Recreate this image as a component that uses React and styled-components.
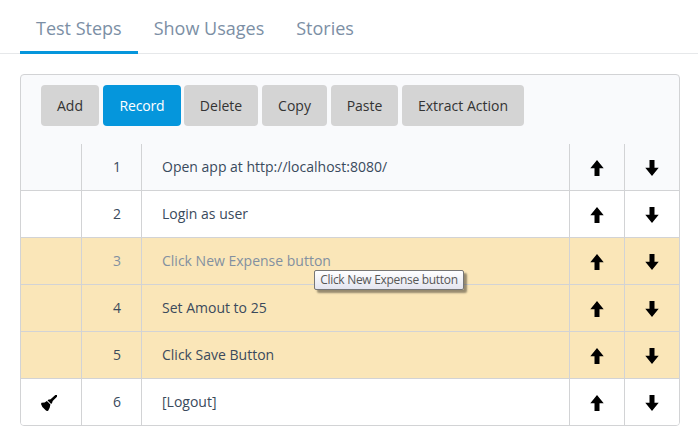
import React from "react";
import styled, { createGlobalStyle } from "styled-components";

const GlobalStyle = createGlobalStyle`
  * { box-sizing: border-box; }
  body {
    margin: 0;
    background: #fff;
    font-family: "Open Sans", sans-serif;
    font-size: 14px;
    color: #3a4a5c;
  }
`;

const Page = styled.main`
  height: 447px;
  overflow: hidden;
`;

const TabBar = styled.nav`
  display: flex;
  height: 54px;
  padding-left: 20px;
  background: linear-gradient(#e6e8ea, #e6e8ea) 0 53px / 100% 1px no-repeat;
`;

const Tab = styled.a`
  height: 54px;
  padding: 14px 16px 0;
  font-size: 18px;
  line-height: 28px;
  color: #7c8fa5;
  white-space: nowrap;
  border-bottom: 3px solid ${(p) => (p.$active ? "#0596dc" : "transparent")};
`;

const Panel = styled.section`
  width: 660px;
  height: 352px;
  margin: 20px 0 0 20px;
  border: 1px solid #d2d3d5;
  border-radius: 4px;
  background: #f9fafc;
  overflow: hidden;
`;

const Toolbar = styled.div`
  display: flex;
  height: 69px;
  padding: 10px 20px 0;
`;

const Button = styled.button`
  width: ${(p) => p.$width}px;
  height: 41px;
  margin: 0 ${(p) => p.$gap ?? 4}px 0 0;
  padding: 0;
  border: 0;
  border-radius: 4px;
  background: ${(p) => (p.$primary ? "#0596dc" : "#d4d4d4")};
  color: ${(p) => (p.$primary ? "#fff" : "#333")};
  font: ${(p) => (p.$primary ? 500 : 400)} 14px/41px "Open Sans", sans-serif;
  letter-spacing: ${(p) => (p.$primary ? "-0.15px" : "0")};
  white-space: nowrap;
`;

const Row = styled.div`
  display: grid;
  grid-template-columns: 61px 60px 428px 55px 54px;
  height: 47px;
  border-bottom: 1px solid #d2d3d5;
  background: ${(p) => p.$background};
  color: ${(p) => (p.$hovered ? "#8290a0" : "#3a4a5c")};
  &:last-child { border-bottom: 0; height: 46px; }
`;

const Cell = styled.div`
  display: flex;
  align-items: center;
  justify-content: ${(p) => p.$align ?? "center"};
  padding: ${(p) => p.$padding ?? "0"};
  border-right: 1px solid #d2d3d5;
  white-space: nowrap;
  &:last-child { border-right: 0; }
`;

const Icon = styled.svg`
  display: block;
  fill: #000;
`;

const Tooltip = styled.div`
  position: absolute;
  left: 314px;
  top: 270px;
  width: 150px;
  height: 20px;
  border: 1px solid #767676;
  border-radius: 2px;
  background: linear-gradient(#fff, #e4e5f0);
  box-shadow: 3px 3px 2px rgba(0, 0, 0, 0.4);
  color: #575757;
  font-size: 12px;
  letter-spacing: -0.3px;
  line-height: 18px;
  text-align: center;
  white-space: nowrap;
`;

const ArrowUp = () => (
  <Icon width="14" height="16" viewBox="0 0 14 16">
    <path d="M7 0L13.7 8.2H9.5V16H4.5V8.2H0.3Z" />
  </Icon>
);

const ArrowDown = () => (
  <Icon width="14" height="16" viewBox="0 0 14 16">
    <path d="M7 16L13.7 7.8H9.5V0H4.5V7.8H0.3Z" />
  </Icon>
);

const Broom = () => (
  <Icon width="17" height="16" viewBox="0 0 17 16">
    <path d="M14.3 0H16V1.8L11.7 6L10.9 8.4L9.9 8.8L6.6 5.4L7.1 4.7L9.6 4.2Z" />
    <path d="M5.9 6.1L9.4 9.6L8.7 12.7L7 15.9L5.2 15.8L1.4 12.1L0 8.9L0.5 7.8L3.6 7.6Z" />
  </Icon>
);

const steps = [
  { text: "Open app at http://localhost:8080/", background: "#f9fafc" },
  { text: "Login as user", background: "#fff" },
  { text: "Click New Expense button", background: "#fae6b8", hovered: true },
  { text: "Set Amout to 25", background: "#fae6b8" },
  { text: "Click Save Button", background: "#fae6b8" },
  { text: "[Logout]", background: "#fff", cleanup: true },
];

export default function App() {
  return (
    <Page>
      <GlobalStyle />
      <TabBar>
        <Tab $active>Test Steps</Tab>
        <Tab>Show Usages</Tab>
        <Tab>Stories</Tab>
      </TabBar>
      <Panel>
        <Toolbar>
          <Button $width={58}>Add</Button>
          <Button $width={78} $gap={3} $primary>Record</Button>
          <Button $width={74}>Delete</Button>
          <Button $width={65}>Copy</Button>
          <Button $width={67}>Paste</Button>
          <Button $width={122}>Extract Action</Button>
        </Toolbar>
        {steps.map((step, i) => (
          <Row key={step.text} $background={step.background} $hovered={step.hovered}>
            <Cell $padding="2px 3px 0 0">{step.cleanup && <Broom />}</Cell>
            <Cell $align="flex-end" $padding="0 20px 2px 0">{i + 1}</Cell>
            <Cell $align="flex-start" $padding="0 0 2px 20px">{step.text}</Cell>
            <Cell $padding="2px 0 0"><ArrowUp /></Cell>
            <Cell $padding="2px 0 0"><ArrowDown /></Cell>
          </Row>
        ))}
      </Panel>
      <Tooltip>Click New Expense button</Tooltip>
    </Page>
  );
}
